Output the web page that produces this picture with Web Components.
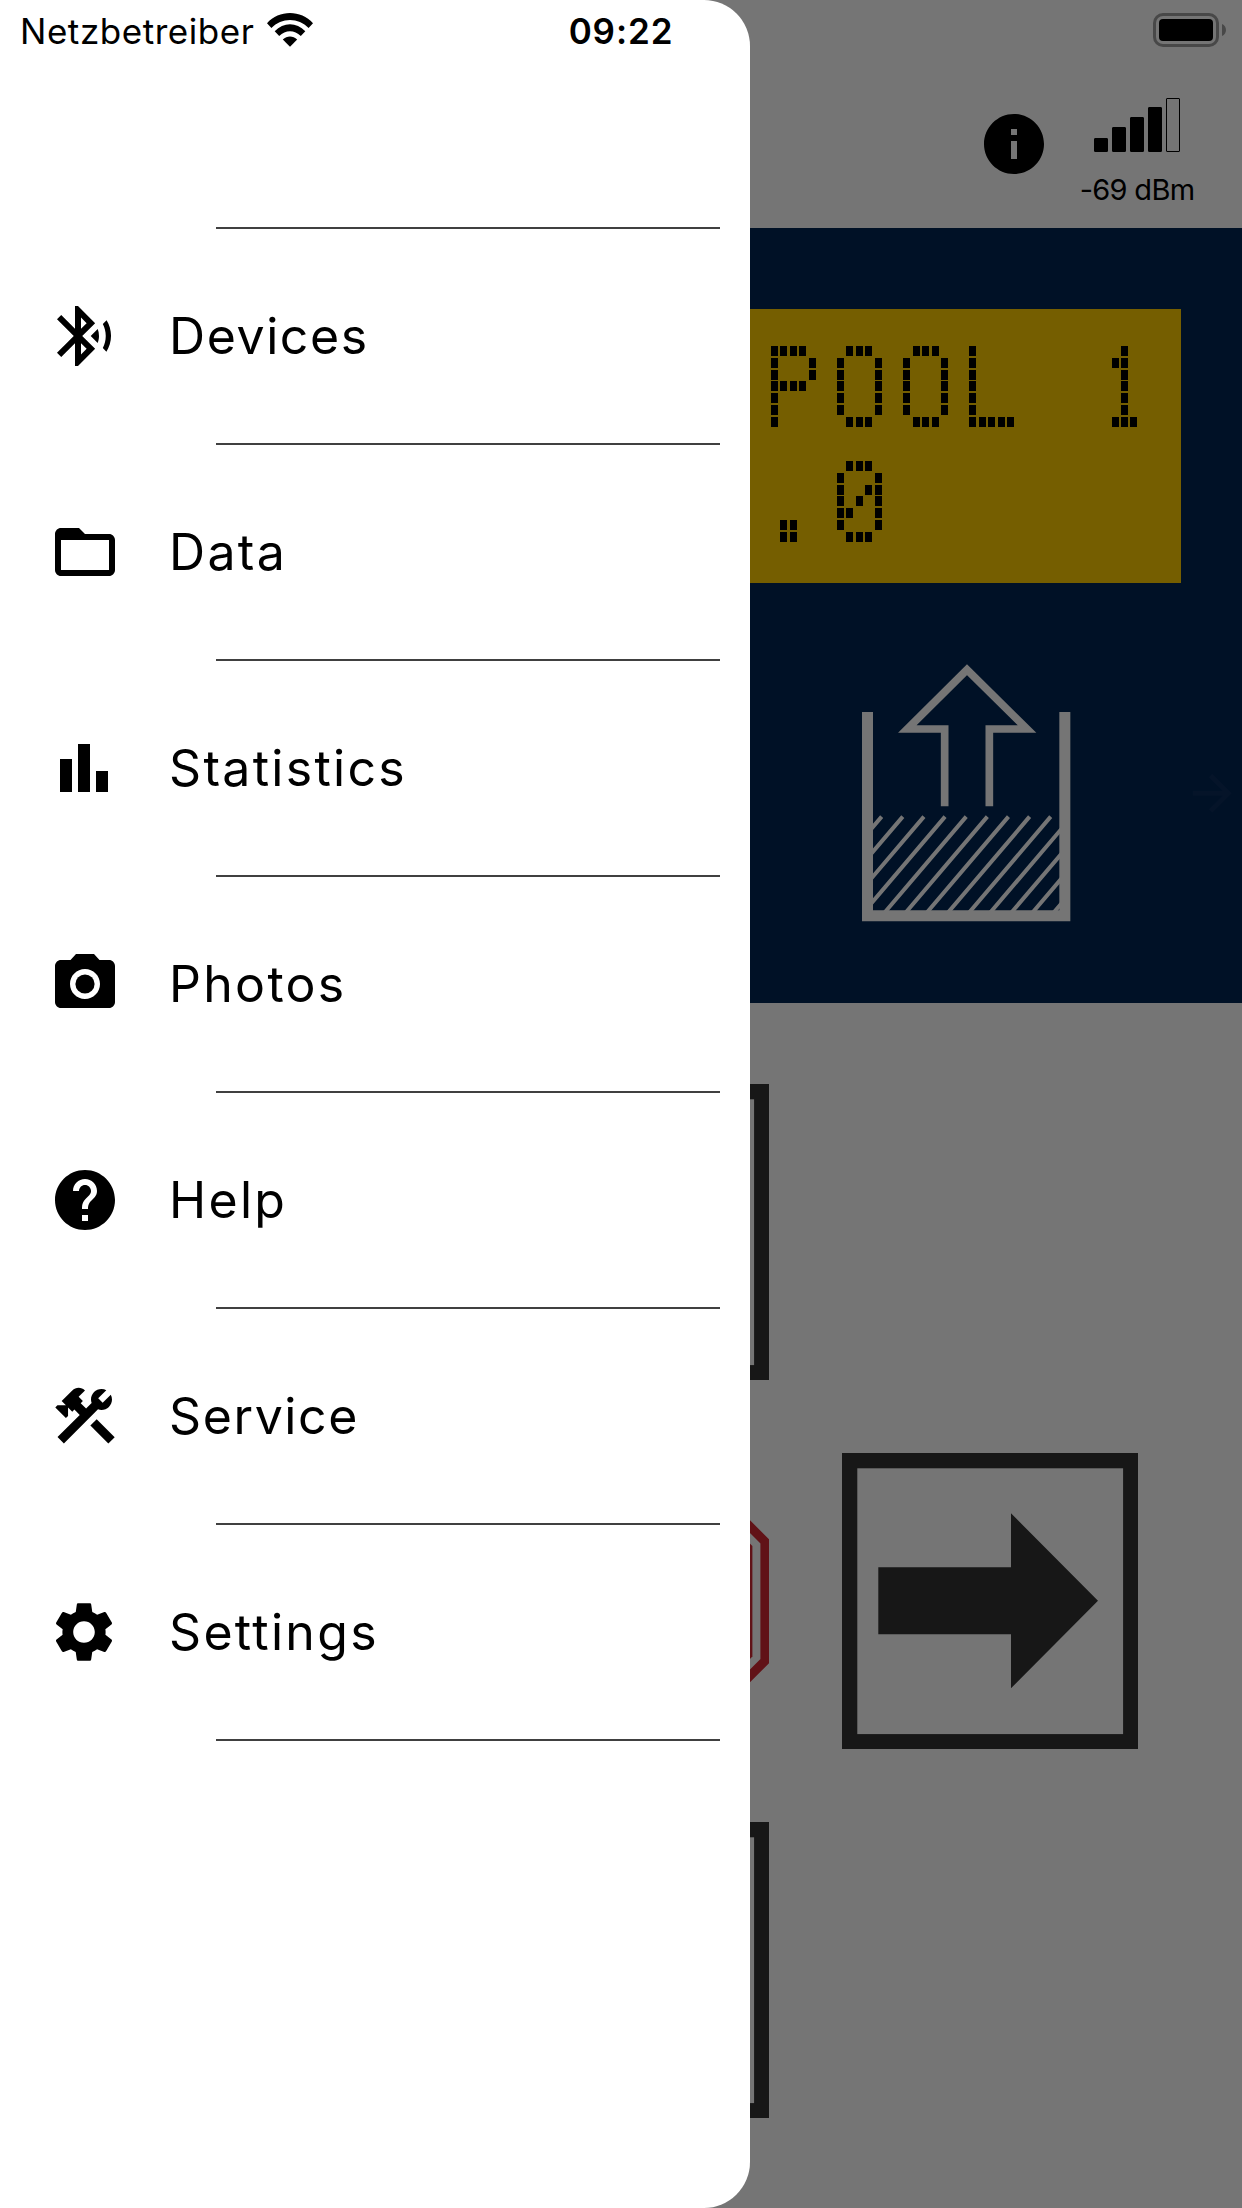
<!DOCTYPE html>
<html lang="de">
<head>
<meta charset="utf-8">
<title>Pool Control</title>
<style>
  html, body { margin: 0; height: 100%; }
  body {
    position: relative;
    width: 1242px;
    height: 2208px;
    overflow: hidden;
    background: white;
    color: black;
    font-family: Inter, "Liberation Sans", sans-serif;
  }
</style>
</head>
<body>
<remote-page></remote-page>
<side-drawer>
  <drawer-item icon="bluetooth">Devices</drawer-item>
  <drawer-item icon="folder" wide>Data</drawer-item>
  <drawer-item icon="chart" wide>Statistics</drawer-item>
  <drawer-item icon="camera" wide>Photos</drawer-item>
  <drawer-item icon="help" wide>Help</drawer-item>
  <drawer-item icon="tools">Service</drawer-item>
  <drawer-item icon="gear" wide>Settings</drawer-item>
</side-drawer>
<status-bar carrier="Netzbetreiber" time="09:22"></status-bar>

<script>
const ICONS = {
  bluetooth: `<path d="M14.24 12.01l2.32 2.32c.28-.72.44-1.51.44-2.33 0-.82-.16-1.59-.43-2.31l-2.33 2.32zm5.29-5.3l-1.26 1.26c.63 1.21.98 2.57.98 4.02s-.36 2.82-.98 4.02l1.2 1.2c.97-1.54 1.54-3.36 1.54-5.31-.01-1.89-.55-3.67-1.48-5.19zm-3.82 1L10 2H9v7.59L4.41 5 3 6.41 8.59 12 3 17.59 4.41 19 9 14.41V22h1l5.71-5.71-4.3-4.29 4.3-4.29zM11 5.83l1.88 1.88L11 9.59V5.83zm1.88 10.46L11 18.17v-3.76l1.88 1.88z"/>`,
  folder: `<path d="M20 6h-8l-2-2H4c-1.1 0-2 .9-2 2v12c0 1.1.9 2 2 2h16c1.1 0 2-.9 2-2V8c0-1.1-.9-2-2-2zm0 12H4V8h16v10z"/>`,
  chart: `<path d="M4 9h4v11H4zM10 4h4v16h-4zM16 13h4v7h-4z"/>`,
  camera: `<circle cx="12" cy="12" r="3.2"/><path d="M9 2L7.17 4H4c-1.1 0-2 .9-2 2v12c0 1.1.9 2 2 2h16c1.1 0 2-.9 2-2V6c0-1.1-.9-2-2-2h-3.17L15 2H9zm3 15c-2.76 0-5-2.24-5-5s2.24-5 5-5 5 2.24 5 5-2.24 5-5 5z"/>`,
  help: `<path d="M12 2C6.48 2 2 6.48 2 12s4.48 10 10 10 10-4.48 10-10S17.52 2 12 2zm1 17h-2v-2h2v2zm2.07-7.75l-.9.92C13.45 12.9 13 13.5 13 15h-2v-.5c0-1.1.45-2.1 1.17-2.83l1.24-1.26c.37-.36.59-.86.59-1.41 0-1.1-.9-2-2-2s-2 .9-2 2H8c0-2.21 1.79-4 4-4s4 1.79 4 4c0 .88-.36 1.68-.93 2.25z"/>`,
  tools: `<rect x="16.34" y="12.87" width="3" height="8.48" transform="matrix(.7071 -.7071 .7071 .7071 -6.8717 17.6255)"/><path d="M17.5 10c1.93 0 3.5-1.57 3.5-3.5 0-.58-.16-1.12-.41-1.6l-2.7 2.7-1.49-1.49 2.7-2.7C18.62 3.16 18.08 3 17.5 3 15.57 3 14 4.57 14 6.5c0 .41.08.8.21 1.16l-1.85 1.85-1.78-1.78.71-.71-1.41-1.41L12 3.49c-1.17-1.17-3.07-1.17-4.24 0L4.22 7.03l1.41 1.41H2.81l-.71.71 3.54 3.54.71-.71V9.15l1.41 1.41.71-.71 1.78 1.78-7.41 7.41 2.12 2.12L16.34 9.79c.36.13.75.21 1.16.21z"/>`,
  gear: `<path d="M19.14 12.94c.04-.3.06-.61.06-.94 0-.32-.02-.64-.07-.94l2.03-1.58c.18-.14.23-.41.12-.61l-1.92-3.32c-.12-.22-.37-.29-.59-.22l-2.39.96c-.5-.38-1.03-.7-1.62-.94l-.36-2.54c-.04-.24-.24-.41-.48-.41h-3.84c-.24 0-.43.17-.47.41l-.36 2.54c-.59.24-1.13.57-1.62.94l-2.39-.96c-.22-.08-.47 0-.59.22L2.74 8.87c-.12.21-.08.47.12.61l2.03 1.58c-.05.3-.09.63-.09.94s.02.64.07.94l-2.03 1.58c-.18.14-.23.41-.12.61l1.92 3.32c.12.22.37.29.59.22l2.39-.96c.5.38 1.03.7 1.62.94l.36 2.54c.05.24.24.41.48.41h3.84c.24 0 .44-.17.47-.41l.36-2.54c.59-.24 1.13-.56 1.62-.94l2.39.96c.22.08.47 0 .59-.22l1.92-3.32c.12-.22.07-.47-.12-.61l-2.01-1.58zM12 15.6c-1.98 0-3.6-1.62-3.6-3.6s1.62-3.6 3.6-3.6 3.6 1.62 3.6 3.6-1.62 3.6-3.6 3.6z"/>`,
  info: `<path d="M12 2C6.48 2 2 6.48 2 12s4.48 10 10 10 10-4.48 10-10S17.52 2 12 2zm1 15h-2v-6h2v6zm0-8h-2V7h2v2z"/>`,
  forward: `<path d="M12 4l-1.41 1.41L16.17 11H4v2h12.17l-5.58 5.59L12 20l8-8z"/>`,
};

class AppIcon extends HTMLElement {
  constructor() {
    super();
    this.attachShadow({ mode: "open" });
  }

  connectedCallback() {
    this.shadowRoot.innerHTML = `
      <style>
        :host { display: block; width: 72px; height: 72px; flex-shrink: 0; }
        svg { display: block; width: 100%; height: 100%; fill: currentColor; }
      </style>
      <svg viewBox="0 0 24 24">${ICONS[this.getAttribute("name")]}</svg>
    `;
  }
}
customElements.define("app-icon", AppIcon);

class StatusBar extends HTMLElement {
  constructor() {
    super();
    this.attachShadow({ mode: "open" });
  }

  connectedCallback() {
    this.shadowRoot.innerHTML = `
      <style>
        :host {
          position: absolute;
          inset: 0 0 auto 0;
          display: grid;
          grid-template-columns: 1fr auto 1fr;
          align-items: center;
          height: 60px;
          padding: 0 20px;
          box-sizing: border-box;
        }
        svg { display: block; }
        .left { display: flex; align-items: center; gap: 13px; }
        .carrier, .time { font-size: 35px; line-height: 58px; padding-top: 2px; }
        .carrier { letter-spacing: 0.55px; }
        .time { font-weight: 600; letter-spacing: 0.9px; }
        .battery { justify-self: end; margin-right: -4px; }
      </style>
      <div class="left">
        <span class="carrier">${this.getAttribute("carrier")}</span>
        <svg width="46" height="34" viewBox="0 0 46 34">
          <path d="M0 10.2C12-3.4 34-3.4 46 10.2L41.600 15C31.500 4.200 14.500 4.200 4.400 15z"/>
          <path d="M7.700 18.300C16.500 9 29.500 9 38.300 18.300L33.800 23C27.500 16.700 18.500 16.700 12.200 23z"/>
          <path d="M15.800 26.400C20 22.400 26 22.400 30.200 26.400L23 33.800z"/>
        </svg>
      </div>
      <span class="time">${this.getAttribute("time")}</span>
      <svg class="battery" width="73" height="34" viewBox="0 0 73 34">
        <rect x="1.500" y="1.500" width="63" height="31" rx="8.500" fill="none" stroke="#484848" stroke-width="3"/>
        <rect x="6" y="6" width="54" height="22" rx="4"/>
        <path d="M69 11c5.300 2.200 5.300 9.800 0 12z" fill="#484848"/>
      </svg>
    `;
  }
}
customElements.define("status-bar", StatusBar);

class DrawerItem extends HTMLElement {
  constructor() {
    super();
    this.attachShadow({ mode: "open" });
  }

  connectedCallback() {
    const icon = this.getAttribute("icon");
    this.shadowRoot.innerHTML = `
      <style>
        :host {
          display: flex;
          align-items: center;
          gap: 48px;
          height: 216px;
          padding: 0 30px 0 49px;
          box-sizing: border-box;
          position: relative;
          font-size: 50px;
          letter-spacing: 1.6px;
        }
        :host([wide]) { letter-spacing: 2.3px; }
        :host([icon="bluetooth"]), :host([icon="chart"]), :host([icon="gear"]) {
          padding-left: 48px;
          gap: 49px;
        }
        :host::after {
          content: "";
          position: absolute;
          left: 216px;
          right: 30px;
          bottom: -1px;
          height: 2px;
          background: #404040;
        }
      </style>
      <app-icon name="${icon}"></app-icon>
      <span><slot></slot></span>
    `;
  }
}
customElements.define("drawer-item", DrawerItem);

class SideDrawer extends HTMLElement {
  constructor() {
    super();
    this.attachShadow({ mode: "open" });
    this.shadowRoot.innerHTML = `
      <style>
        :host {
          position: absolute;
          inset: 0;
          display: block;
          background: rgba(0, 0, 0, 0.54);
        }
        nav {
          display: flex;
          flex-direction: column;
          width: 750px;
          height: 100%;
          background: white;
          border-radius: 0 46px 46px 0;
        }
        header {
          box-sizing: border-box;
          height: 228px;
          padding: 227px 30px 0 216px;
        }
        header div { height: 2px; background: #404040; }
      </style>
      <nav>
        <header><div></div></header>
        <slot></slot>
      </nav>
    `;
  }
}
customElements.define("side-drawer", SideDrawer);

class SignalMeter extends HTMLElement {
  constructor() {
    super();
    this.attachShadow({ mode: "open" });
  }

  connectedCallback() {
    const heights = [14, 25, 35, 45, 54];
    const level = Number(this.getAttribute("level"));
    this.shadowRoot.innerHTML = `
      <style>
        :host {
          display: flex;
          flex-direction: column;
          align-items: center;
          width: 114px;
          font-size: 29px;
          line-height: 36px;
          letter-spacing: -0.7px;
        }
        .bars { display: flex; align-items: flex-end; gap: 4px; height: 54px; margin: 0 0 20px; }
        .bar { width: 14px; box-sizing: border-box; border: 1.500px solid black; border-radius: 1px; }
        .bar.on { background: black; }
        span { white-space: nowrap; }
      </style>
      <div class="bars">
        ${heights.map((h, i) => `<div class="bar ${i < level ? "on" : ""}" style="height:${h}px"></div>`).join("")}
      </div>
      <span><slot></slot></span>
    `;
  }
}
customElements.define("signal-meter", SignalMeter);

// 16 characters of 5x7 dots. Each character is scaled to its dot cell and sampled
// at the centre of every dot, then each hit grows into a full dot.
const CELL = 66.267;
const DOT_X = 9.467;
const DOT_Y = 11.833;

// first and last dot column, first dot row, overhang left and right
const FIT = {
  "P": { cols: [0, 4], row: 0, over: [0, -1] },
  "L": { cols: [0, 4], row: 0, over: [0, 0] },
  "1": { cols: [1, 3], row: 0, over: [1, 1], font: "Liberation Mono", stroke: 3 },
  ".": { cols: [1, 2], row: 5, over: [0, 0] },
};
const FIT_ROUND = { cols: [0, 4], row: 0, over: [1.5, 1.5] };

class LcdDisplay extends HTMLElement {
  constructor() {
    super();
    this.attachShadow({ mode: "open" });
  }

  _char(ch, index) {
    const { cols, row, over, font = "DejaVu Sans Mono", stroke = 0 } = FIT[ch] || FIT_ROUND;
    const ctx = document.createElement("canvas").getContext("2d");
    ctx.font = `100px "${font}"`;
    const m = ctx.measureText(ch);

    const left = cols[0] * DOT_X - 1 - over[0];
    const right = cols[1] * DOT_X + 8.5 + over[1];
    const top = row * DOT_Y - 1;
    const bottom = 6 * DOT_Y + 11.5;

    const sx = (right - left) / (m.actualBoundingBoxRight + m.actualBoundingBoxLeft);
    const sy = (bottom - top) / (m.actualBoundingBoxAscent + m.actualBoundingBoxDescent);
    const x = index * CELL + left + m.actualBoundingBoxLeft * sx;
    const y = top + m.actualBoundingBoxAscent * sy;
    const slash = ch === "0"
      ? `<line x1="${index * CELL + 12}" y1="53.700" x2="${index * CELL + 33}" y2="27.300" stroke="black" stroke-width="5"/>`
      : "";
    return `<text font-family="${font}" stroke="black" stroke-width="${stroke}" transform="matrix(${sx} 0 0 ${sy} ${x} ${y})">${ch}</text>${slash}`;
  }

  connectedCallback() {
    const lines = this.getAttribute("text").split("|");
    this.shadowRoot.innerHTML = `
      <style>
        :host {
          display: block;
          height: 274px;
          box-sizing: border-box;
          padding: 37px 0 0 47px;
          background: #ffcc00;
        }
        .dots { filter: url(#dot); }
        .line {
          display: block;
          width: 1072px;
          height: 115px;
          overflow: visible;
          font-size: 100px;
          mask-image:
            repeating-linear-gradient(90deg, transparent 0 3px, #000 3px 4px, transparent 4px ${DOT_X}px),
            repeating-linear-gradient(180deg, transparent 0 4px, #000 4px 6px, transparent 6px ${DOT_Y}px);
          mask-composite: intersect;
        }
        .defs { position: absolute; }
      </style>
      <svg class="defs" width="0" height="0">
        <filter id="dot" x="0" y="0" width="100%" height="100%" color-interpolation-filters="sRGB">
          <feComponentTransfer><feFuncA type="linear" slope="20" intercept="-8"/></feComponentTransfer>
          <feMorphology operator="dilate" radius="3 4"/>
        </filter>
      </svg>
      <div class="dots">
        ${lines.map(line => `<svg class="line">${[...line].map((ch, i) => ch === " " ? "" : this._char(ch, i)).join("")}</svg>`).join("")}
      </div>
    `;
  }
}
customElements.define("lcd-display", LcdDisplay);

class TankPicture extends HTMLElement {
  constructor() {
    super();
    this.attachShadow({ mode: "open" });
    let hatch = "";
    for (let i = 0; i < 13; i++) {
      const x = 125 + i * 63.400;
      hatch += `M${x} 529L${x - 246} 818`;
    }
    this.shadowRoot.innerHTML = `
      <style>
        :host { display: block; width: 208.500px; height: 258px; color: white; }
        svg { display: block; width: 100%; height: 100%; fill: none; stroke: currentColor; }
      </style>
      <svg viewBox="66 71 625.500 774">
        <clipPath id="water"><rect x="90" y="500" width="575" height="320"/></clipPath>
        <path d="M82.500 215V826H674.500V215" stroke-width="33"/>
        <path d="M314 498V266H202L381 88 561 266H448V498" stroke-width="23"/>
        <path d="${hatch}" stroke-width="12" clip-path="url(#water)"/>
      </svg>
    `;
  }
}
customElements.define("tank-picture", TankPicture);

class RemoteKey extends HTMLElement {
  constructor() {
    super();
    this.attachShadow({ mode: "open" });
  }

  connectedCallback() {
    const dir = this.getAttribute("dir");
    const turn = { right: 0, down: 90, left: 180, up: 270 }[dir];
    const frame = `
      <rect x="7.650" y="7.650" width="281.100" height="281.100" fill="none" stroke="#333" stroke-width="15.300"/>
      <path d="M36.300 114.200H169V60.300L256 147.800 169 235.300V181.200H36.300z" fill="#333" transform="rotate(${turn} 148.200 148.200)"/>`;
    const stop = `
      <path d="M88.500 4.500H207.900L291.900 88.500V207.900L207.900 291.900H88.500L4.500 207.900V88.500z" fill="none" stroke="#d32934" stroke-width="9"/>
      <path d="M93 17H203.400L279.400 93V203.400L203.400 279.400H93L17 203.400V93z" fill="#d32934"/>`;
    this.shadowRoot.innerHTML = `
      <style>
        :host { display: block; width: 296.400px; height: 296.400px; }
        svg { display: block; width: 100%; height: 100%; }
      </style>
      <svg viewBox="0 0 296.400 296.400">${dir === "stop" ? stop : frame}</svg>
    `;
  }
}
customElements.define("remote-key", RemoteKey);

class RemotePage extends HTMLElement {
  constructor() {
    super();
    this.attachShadow({ mode: "open" });
    this.shadowRoot.innerHTML = `
      <style>
        :host { display: flex; flex-direction: column; height: 100%; }
        header {
          display: flex;
          justify-content: flex-end;
          align-items: flex-start;
          gap: 30px;
          height: 228px;
          padding: 98px 48px 0 0;
          box-sizing: border-box;
        }
        header app-icon { margin-top: 10px; }
        .panel {
          height: 774.500px;
          background: #002753;
          padding: 81px 0 0;
          box-sizing: border-box;
        }
        lcd-display { margin: 0 61px 81px; }
        .tank { display: flex; justify-content: flex-end; align-items: center; gap: 112px; }
        .tank app-icon { width: 58.500px; height: 58.500px; margin-right: 1px; color: #0b2c5b; }
        .keys {
          display: grid;
          grid-template-columns: repeat(3, 296.400px);
          grid-auto-rows: 296.400px;
          gap: 72.700px;
          justify-content: center;
          padding-top: 81.300px;
        }
        .up, .down { grid-column: 2; }
      </style>
      <header>
        <app-icon name="info"></app-icon>
        <signal-meter level="4">-69 dBm</signal-meter>
      </header>
      <section class="panel">
        <lcd-display text="          POOL 1|          .0"></lcd-display>
        <div class="tank">
          <tank-picture></tank-picture>
          <app-icon name="forward"></app-icon>
        </div>
      </section>
      <section class="keys">
        <remote-key class="up" dir="up"></remote-key>
        <remote-key dir="left" style="grid-column:1"></remote-key>
        <remote-key dir="stop"></remote-key>
        <remote-key dir="right"></remote-key>
        <remote-key class="down" dir="down"></remote-key>
      </section>
    `;
  }
}
customElements.define("remote-page", RemotePage);
</script>
</body>
</html>
